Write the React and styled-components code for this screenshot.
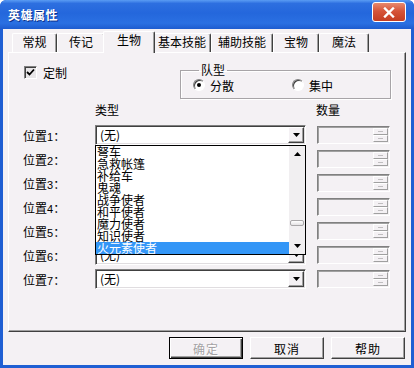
import React from "react";
import styled, { createGlobalStyle } from "styled-components";

const GlobalStyle = createGlobalStyle`
  html, body {
    margin: 0;
    padding: 0;
    background: #ffffff;
  }
  body {
    font-family: "Noto Sans CJK SC", "Liberation Sans", sans-serif;
    font-size: 12px;
    color: #000;
  }
`;

const FACE = "#f4f1f4";

const tabs = [
  { label: "常规", width: 45 },
  { label: "传记", width: 48 },
  { label: "生物", width: 48, selected: true },
  { label: "基本技能", width: 58 },
  { label: "辅助技能", width: 62 },
  { label: "宝物", width: 46 },
  { label: "魔法", width: 50 },
];

const listItems = [
  "弩车",
  "急救帐篷",
  "补给车",
  "鬼魂",
  "战争使者",
  "和平使者",
  "魔力使者",
  "知识使者",
  "火元素使者",
];

const Window = styled.div`
  width: 414px;
  height: 368px;
  box-sizing: border-box;
  display: flex;
  flex-direction: column;
  background: #1f5fd3;
  border-radius: 6px 6px 0 0;
  padding: 0 3px 3px 3px;
  overflow: hidden;
`;

const TitleBar = styled.div`
  height: 29px;
  flex: 0 0 29px;
  margin: 0 -3px;
  padding: 0 8px;
  display: flex;
  align-items: center;
  justify-content: space-between;
  background: linear-gradient(
    to bottom,
    #5a9cf3 0%,
    #2d6fe0 12%,
    #2467dc 45%,
    #2a70e2 80%,
    #1d5ccf 100%
  );
  border-radius: 6px 6px 0 0;
`;

const Title = styled.span`
  color: #ffffff;
  font-weight: bold;
  font-size: 12px;
  letter-spacing: 0.5px;
  text-shadow: 1px 1px 0 #0a2f8a;
`;

const CloseButton = styled.div`
  width: 34px;
  height: 20px;
  align-self: flex-start;
  margin-top: 2px;
  box-sizing: border-box;
  border: 1px solid #ffffff;
  border-radius: 3px;
  background: linear-gradient(to bottom, #e8896e 0%, #d6553a 45%, #c43d22 100%);
  display: flex;
  align-items: center;
  justify-content: center;
`;

const Client = styled.div`
  flex: 1;
  background: ${FACE};
  padding: 2px 5px 0 5px;
  display: flex;
  flex-direction: column;
`;

const TabStrip = styled.div`
  height: 21px;
  display: flex;
  align-items: flex-end;
  padding-left: 4px;
`;

const Tab = styled.div`
  box-sizing: border-box;
  width: ${(p) => (p.$selected ? p.$width + 4 : p.$width)}px;
  height: ${(p) => (p.$selected ? 22 : 19)}px;
  margin: ${(p) => (p.$selected ? "0 -2px -1px -2px" : "0")};
  position: relative;
  z-index: ${(p) => (p.$selected ? 1 : 0)};
  background: ${FACE};
  border-top: 1px solid #ffffff;
  border-left: 1px solid #ffffff;
  border-right: 1px solid #404040;
  box-shadow: inset -1px 0 0 #a0a0a0;
  border-radius: 2px 2px 0 0;
  display: flex;
  justify-content: center;
  padding-top: ${(p) => (p.$selected ? 1 : 1)}px;
  line-height: 14px;
  white-space: nowrap;
`;

const Panel = styled.div`
  height: 280px;
  box-sizing: border-box;
  border: 1px solid;
  border-color: #ffffff #404040 #404040 #ffffff;
  box-shadow: inset -1px -1px 0 #a0a0a0;
  padding: 10px 14px 0 14px;
  display: flex;
  flex-direction: column;
`;

const TopRow = styled.div`
  display: flex;
  align-items: flex-start;
  justify-content: space-between;
`;

const CheckLabel = styled.label`
  display: flex;
  align-items: center;
  gap: 6px;
  margin-top: 3px;
  margin-left: 1px;
  line-height: 13px;
`;

const CheckBox = styled.span`
  width: 13px;
  height: 13px;
  box-sizing: border-box;
  border: 1px solid;
  border-color: #808080 #ffffff #ffffff #808080;
  box-shadow: inset 1px 1px 0 #404040;
  background: #e8e6e8;
  display: flex;
  align-items: center;
  justify-content: center;
`;

const GroupBox = styled.fieldset`
  width: 211px;
  box-sizing: border-box;
  margin: 0;
  padding: 1px 0 6px 12px;
  border: 1px solid #a7a4a7;
  box-shadow: inset 1px 1px 0 #ffffff, 1px 1px 0 #ffffff;
  min-width: 0;
`;

const Legend = styled.legend`
  margin-left: 6px;
  padding: 0 2px;
  line-height: 14px;
  font-size: 12px;
`;

const RadioRow = styled.div`
  display: flex;
  align-items: center;
  height: 14px;
`;

const RadioItem = styled.label`
  display: flex;
  align-items: center;
  gap: 5px;
  width: ${(p) => p.$width || "auto"};
`;

const RadioCircle = styled.span`
  width: 12px;
  height: 12px;
  box-sizing: border-box;
  border-radius: 50%;
  border: 1px solid;
  border-color: #808080 #ffffff #ffffff #808080;
  box-shadow: inset 1px 1px 0 #404040;
  background: #ffffff;
  display: flex;
  align-items: center;
  justify-content: center;

  &::after {
    content: "";
    width: 4px;
    height: 4px;
    border-radius: 50%;
    background: ${(p) => (p.$checked ? "#000" : "transparent")};
  }
`;

const HeaderRow = styled.div`
  display: flex;
  margin-top: 4px;
  height: 14px;
  line-height: 14px;
`;

const Rows = styled.div`
  display: flex;
  flex-direction: column;
  gap: 4px;
  margin-top: 8px;
`;

const Row = styled.div`
  display: flex;
  align-items: center;
  height: 20px;
`;

const RowLabel = styled.span`
  width: 72px;
  flex: 0 0 72px;
`;

const Digit = styled.span`
  font-family: "Liberation Sans", sans-serif;
  font-size: 11px;
`;

const ComboCell = styled.div`
  width: 211px;
  flex: 0 0 211px;
  height: 20px;
  position: relative;
  z-index: ${(p) => (p.$open ? 5 : 0)};
`;

const ComboBox = styled.div`
  width: 100%;
  height: 100%;
  box-sizing: border-box;
  border: 1px solid;
  border-color: #808080 #ffffff #ffffff #808080;
  box-shadow: inset 1px 1px 0 #404040, inset -1px -1px 0 #e0dde0;
  background: #ffffff;
  display: flex;
  align-items: center;
  padding: 1px 1px 1px 4px;
`;

const ComboText = styled.span`
  flex: 1;
  line-height: 14px;
`;

const ArrowButton = styled.span`
  width: 16px;
  height: 16px;
  box-sizing: border-box;
  background: ${FACE};
  border: 1px solid;
  border-color: #ffffff #404040 #404040 #ffffff;
  box-shadow: inset -1px -1px 0 #a0a0a0;
  display: flex;
  align-items: center;
  justify-content: center;
`;

const DropList = styled.div`
  position: absolute;
  top: 100%;
  left: 0;
  width: 211px;
  height: 110px;
  box-sizing: border-box;
  border: 1px solid #000000;
  background: #ffffff;
  display: flex;
`;

const ListItems = styled.div`
  flex: 1;
  overflow: hidden;
  display: flex;
  flex-direction: column;
`;

const ListItem = styled.div`
  height: 12px;
  line-height: 12px;
  padding-left: 1px;
  white-space: nowrap;
  background: ${(p) => (p.$selected ? "#3396f7" : "transparent")};
  color: ${(p) => (p.$selected ? "#ffffff" : "#000000")};
`;

const ScrollBar = styled.div`
  width: 16px;
  flex: 0 0 16px;
  display: flex;
  flex-direction: column;
  background: #f1eff1;
`;

const ScrollArrow = styled.div`
  height: 16px;
  flex: 0 0 16px;
  display: flex;
  align-items: center;
  justify-content: center;
`;

const ScrollTrack = styled.div`
  flex: 1;
  display: flex;
  flex-direction: column;
  align-items: center;
`;

const ScrollThumb = styled.div`
  width: 14px;
  height: 6px;
  margin-top: 58px;
  box-sizing: border-box;
  border: 1px solid #a9a7a9;
  border-radius: 2px;
  background: linear-gradient(to bottom, #ffffff, #e4e2e4);
`;

const SpinBox = styled.div`
  width: 73px;
  height: 18px;
  margin-left: 11px;
  box-sizing: border-box;
  border: 1px solid;
  border-color: #808080 #ffffff #ffffff #808080;
  box-shadow: inset 1px 1px 0 #a0a0a0;
  background: ${FACE};
  display: flex;
  justify-content: flex-end;
  padding: 1px 1px 1px 0;
`;

const SpinButtons = styled.div`
  width: 15px;
  display: flex;
  flex-direction: column;
`;

const SpinHalf = styled.div`
  flex: 1;
  box-sizing: border-box;
  border: 1px solid;
  border-color: #ffffff #a0a0a0 #a0a0a0 #ffffff;
  display: flex;
  align-items: center;
  justify-content: center;

  &::after {
    content: "";
    width: 5px;
    height: 1px;
    background: #c0bec0;
  }
`;

const ButtonRow = styled.div`
  display: flex;
  justify-content: flex-end;
  gap: 7px;
  margin-top: 5px;
  padding-right: 1px;
`;

const DialogButton = styled.div`
  width: 74px;
  height: 22px;
  box-sizing: border-box;
  border: 1px solid;
  border-color: ${(p) =>
    p.$default ? "#000000" : "#ffffff #404040 #404040 #ffffff"};
  box-shadow: ${(p) =>
    p.$default
      ? "inset 1px 1px 0 #ffffff, inset -1px -1px 0 #404040, inset -2px -2px 0 #a0a0a0"
      : "inset -1px -1px 0 #a0a0a0"};
  background: ${FACE};
  display: flex;
  align-items: center;
  justify-content: center;
  color: ${(p) => (p.$disabled ? "#a4a2a4" : "#000000")};
  text-shadow: ${(p) => (p.$disabled ? "1px 1px 0 #ffffff" : "none")};
  letter-spacing: 1px;
`;

const DownTriangle = ({ color = "#000" }) => (
  <svg width="7" height="4" viewBox="0 0 7 4">
    <polygon points="0,0 7,0 3.5,4" fill={color} />
  </svg>
);

const UpTriangle = ({ color = "#000" }) => (
  <svg width="7" height="4" viewBox="0 0 7 4">
    <polygon points="0,4 7,4 3.5,0" fill={color} />
  </svg>
);

const Combo = ({ open }) => (
  <ComboCell $open={open}>
    <ComboBox>
      <ComboText>(无)</ComboText>
      <ArrowButton>
        <DownTriangle />
      </ArrowButton>
    </ComboBox>
    {open && (
      <DropList>
        <ListItems>
          {listItems.map((item, i) => (
            <ListItem key={item} $selected={i === listItems.length - 1}>
              {item}
            </ListItem>
          ))}
        </ListItems>
        <ScrollBar>
          <ScrollArrow>
            <UpTriangle />
          </ScrollArrow>
          <ScrollTrack>
            <ScrollThumb />
          </ScrollTrack>
          <ScrollArrow>
            <DownTriangle />
          </ScrollArrow>
        </ScrollBar>
      </DropList>
    )}
  </ComboCell>
);

const Spinner = () => (
  <SpinBox>
    <SpinButtons>
      <SpinHalf />
      <SpinHalf />
    </SpinButtons>
  </SpinBox>
);

export default function App() {
  return (
    <>
      <GlobalStyle />
      <Window>
        <TitleBar>
          <Title>英雄属性</Title>
          <CloseButton>
            <svg width="12" height="11" viewBox="0 0 12 11">
              <path
                d="M2 1.5 L10 9.5 M10 1.5 L2 9.5"
                stroke="#ffffff"
                strokeWidth="2.4"
                strokeLinecap="square"
              />
            </svg>
          </CloseButton>
        </TitleBar>
        <Client>
          <TabStrip>
            {tabs.map((t) => (
              <Tab key={t.label} $width={t.width} $selected={t.selected}>
                {t.label}
              </Tab>
            ))}
          </TabStrip>
          <Panel>
            <TopRow>
              <CheckLabel>
                <CheckBox>
                  <svg width="9" height="9" viewBox="0 0 9 9">
                    <path
                      d="M1 4 L3.5 6.5 L8 1.5"
                      stroke="#000"
                      strokeWidth="1.8"
                      fill="none"
                    />
                  </svg>
                </CheckBox>
                定制
              </CheckLabel>
              <GroupBox>
                <Legend>队型</Legend>
                <RadioRow>
                  <RadioItem $width="99px">
                    <RadioCircle $checked />
                    分散
                  </RadioItem>
                  <RadioItem>
                    <RadioCircle />
                    集中
                  </RadioItem>
                </RadioRow>
              </GroupBox>
            </TopRow>
            <HeaderRow>
              <RowLabel />
              <ComboCell as="span">类型</ComboCell>
              <span style={{ marginLeft: 10 }}>数量</span>
            </HeaderRow>
            <Rows>
              {[1, 2, 3, 4, 5, 6, 7].map((n) => (
                <Row key={n}>
                  <RowLabel>
                    位置<Digit>{n}</Digit>：
                  </RowLabel>
                  <Combo open={n === 1} />
                  <Spinner />
                </Row>
              ))}
            </Rows>
          </Panel>
          <ButtonRow>
            <DialogButton $default $disabled>
              确定
            </DialogButton>
            <DialogButton>取消</DialogButton>
            <DialogButton>帮助</DialogButton>
          </ButtonRow>
        </Client>
      </Window>
    </>
  );
}
